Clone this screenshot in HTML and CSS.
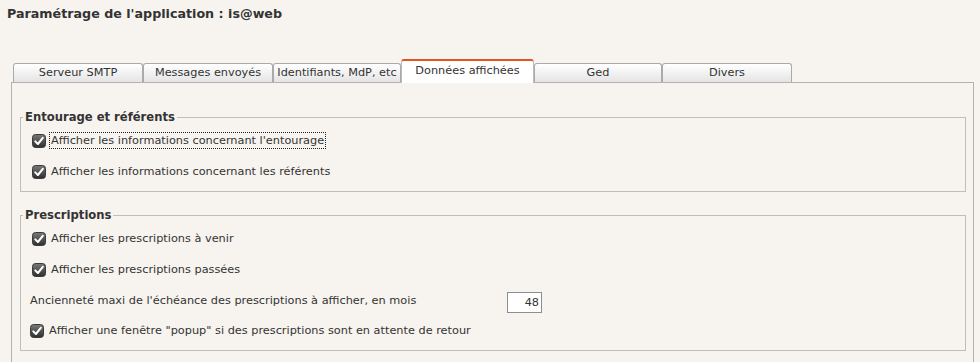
FILE: index.html
```html
<!DOCTYPE html>
<html>
<head>
  <link rel="stylesheet" href="styles.css">
</head>
<body>
  <h1 class="title">Paramétrage de l'application : is@web</h1>

  <div class="tabs">
    <div class="tab">Serveur SMTP</div>
    <div class="tab">Messages envoyés</div>
    <div class="tab tab-narrow">Identifiants, MdP, etc</div>
    <div class="tab tab-active">Données affichées</div>
    <div class="tab tab-narrow">Ged</div>
    <div class="tab">Divers</div>
  </div>

  <div class="panel">
    <fieldset class="group">
      <legend>Entourage et référents</legend>
      <label class="row">
        <svg class="check" width="14" height="14" viewBox="0 0 14 14"><use href="#box"/></svg>
        <span class="focused">Afficher les informations concernant l'entourage</span>
      </label>
      <label class="row">
        <svg class="check" width="14" height="14" viewBox="0 0 14 14"><use href="#box"/></svg>
        <span>Afficher les informations concernant les référents</span>
      </label>
    </fieldset>

    <fieldset class="group group-second">
      <legend>Prescriptions</legend>
      <label class="row">
        <svg class="check" width="14" height="14" viewBox="0 0 14 14"><use href="#box"/></svg>
        <span>Afficher les prescriptions à venir</span>
      </label>
      <label class="row">
        <svg class="check" width="14" height="14" viewBox="0 0 14 14"><use href="#box"/></svg>
        <span>Afficher les prescriptions passées</span>
      </label>
      <div class="row row-field">
        <span class="field-label">Ancienneté maxi de l'échéance des prescriptions à afficher, en mois</span>
        <input class="num" type="text" value="48">
      </div>
      <label class="row row-shift">
        <svg class="check" width="14" height="14" viewBox="0 0 14 14"><use href="#box"/></svg>
        <span>Afficher une fenêtre "popup" si des prescriptions sont en attente de retour</span>
      </label>
    </fieldset>
  </div>

  <!-- shared checkbox drawing -->
  <svg width="0" height="0" class="defs">
    <defs>
      <linearGradient id="boxfill" x1="0" y1="0" x2="0" y2="1">
        <stop offset="0" stop-color="#7a7a7a"/>
        <stop offset="1" stop-color="#2e2e2e"/>
      </linearGradient>
      <g id="box">
        <rect x="0.5" y="0.5" width="13" height="13" rx="3" fill="url(#boxfill)" stroke="#3a3a3a"/>
        <path d="M3.3 7.4 L5.9 10 L10.8 3.9" fill="none" stroke="#fff" stroke-width="2" stroke-linecap="round" stroke-linejoin="round"/>
      </g>
    </defs>
  </svg>
</body>
</html>
```

FILE: styles.css
```css
body {
  margin: 0;
  background: #f7f3ef;
  font-family: "DejaVu Sans", Verdana, sans-serif;
  font-size: 11.3px;
  color: #333;
}
.title {
  margin: 0;
  padding: 6px 7px 0;
  font-size: 12.7px;
  line-height: 15px;
  font-weight: bold;
  color: #333;
}

/* tab strip */
.tabs {
  display: flex;
  align-items: flex-end;
  margin: 38px 0 0 13px;
}
.tab {
  width: 128px;
  height: 18px;
  line-height: 18px;
  text-align: center;
  border: 1px solid #aaa;
  border-bottom: none;
  border-radius: 3px 3px 0 0;
  background: linear-gradient(#fff, #e4e4e4);
  color: #333;
}
.tab-narrow {
  width: 126px;
}
.tab-active {
  position: relative;
  z-index: 1;
  width: 131px;
  height: 19px;
  line-height: 14px;
  padding-top: 3px;
  margin-bottom: -1px;
  border-top: 2px solid #e2531f;
  border-color: #e2531f #bbb #bbb;
  background: #fff;
}

/* panel */
.panel {
  box-sizing: border-box;
  width: 963px;
  min-height: 300px;
  margin-left: 11px;
  padding: 27px 7px 0 8px;
  border: 1px solid #b5b1ad;
}
.group {
  margin: 0;
  padding: 1px 0 4px;
  border: 1px solid #c2bdb8;
}
.group-second {
  margin-top: 16px;
  padding-bottom: 5px;
}
.group legend {
  margin-left: 2px;
  padding: 0 2px;
  font-weight: bold;
  font-size: 11.6px;
  line-height: 14px;
  color: #333;
}
.row {
  display: flex;
  align-items: center;
  gap: 5px;
  height: 31px;
  padding-left: 11px;
}
.row-shift {
  height: 29px;
  padding-left: 9px;
}
.check {
  display: block;
  flex: none;
}
.focused {
  outline: 1px dotted #222;
  outline-offset: 1px;
}
.row-field {
  gap: 0;
  padding-left: 9px;
}
.field-label {
  width: 477px;
}
.num {
  box-sizing: border-box;
  width: 35px;
  height: 21px;
  margin-top: 3px;
  padding: 0 2px 0 0;
  border: 1px solid #8e8e8e;
  background: #fff;
  text-align: right;
  font-family: "DejaVu Sans", Verdana, sans-serif;
  font-size: 11.3px;
  color: #333;
}
.defs {
  position: absolute;
}
```
